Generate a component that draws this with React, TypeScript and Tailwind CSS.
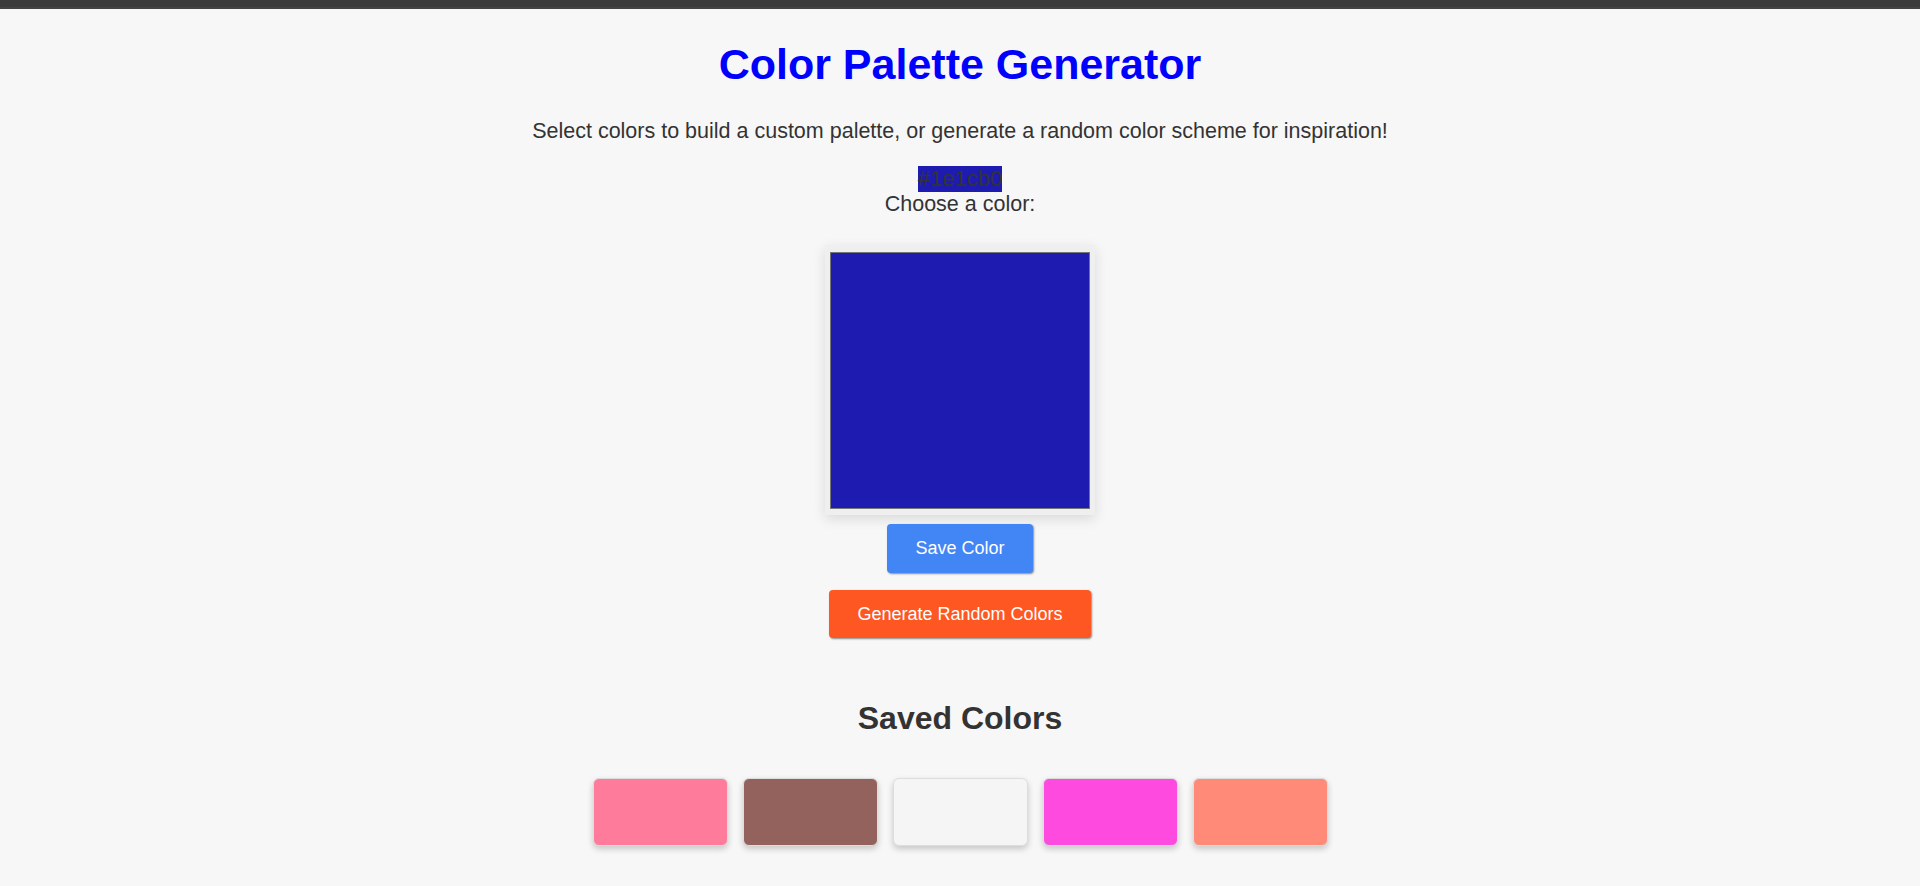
import React, { useState } from 'react';

const savedColors = ['#ff7b9c', '#94625c', '#f5f5f5', '#ff4adf', '#ff8a78'];

const App: React.FC = () => {
  const [color] = useState('#1e1cb0');

  return (
    <div className="min-h-screen bg-[#f7f7f7] text-[#333] font-['Liberation_Sans',Arial,sans-serif]">
      {/* Top strip */}
      <div className="h-[9px] bg-[#3c3c3c] border-b-2 border-[#444444]" />

      <div className="flex flex-col items-center text-center">
        <h1 className="mt-[31px] text-[43px] leading-[49px] font-bold text-[#0000ff]">
          Color Palette Generator
        </h1>
        <p className="mt-[30px] text-[21.5px] leading-[25px]">
          Select colors to build a custom palette, or generate a random color scheme for inspiration!
        </p>

        <span className="mt-[22px] inline-block bg-[#1e1cb0] text-[22px] leading-[26px] text-[#333] font-['Liberation_Sans',Arial,sans-serif]">
          {color}
        </span>
        <label className="text-[21.5px] leading-[25px]">Choose a color:</label>

        {/* Color picker */}
        <div className="mt-[28px] w-[270px] h-[270px] bg-[#efefef] pl-[5px] pr-[5px] pt-[7px] pb-[6px] shadow-[0_4px_12px_rgba(0,0,0,0.12)]">
          <div className="h-full w-full border border-[#767676] bg-[#1e1cb0]" />
        </div>

        <button className="mt-[9px] h-[49px] px-7 rounded bg-[#4285f4] text-white text-[18px] shadow-[1px_1px_2px_rgba(0,0,0,0.45)]">
          Save Color
        </button>
        <button className="mt-[17px] h-[48px] px-7 rounded bg-[#ff5722] text-white text-[18px] shadow-[1px_1px_2px_rgba(0,0,0,0.45)]">
          Generate Random Colors
        </button>

        <h2 className="mt-[62px] text-[32px] leading-[37px] font-bold">Saved Colors</h2>

        <div className="mt-[41px] flex gap-[15px]">
          {savedColors.map((c) => (
            <div
              key={c}
              className="w-[135px] h-[68px] rounded-[6px] border border-[#dddddd] shadow-[0_3px_6px_rgba(0,0,0,0.2)]"
              style={{ backgroundColor: c }}
            />
          ))}
        </div>
      </div>
    </div>
  );
};

export default App;
